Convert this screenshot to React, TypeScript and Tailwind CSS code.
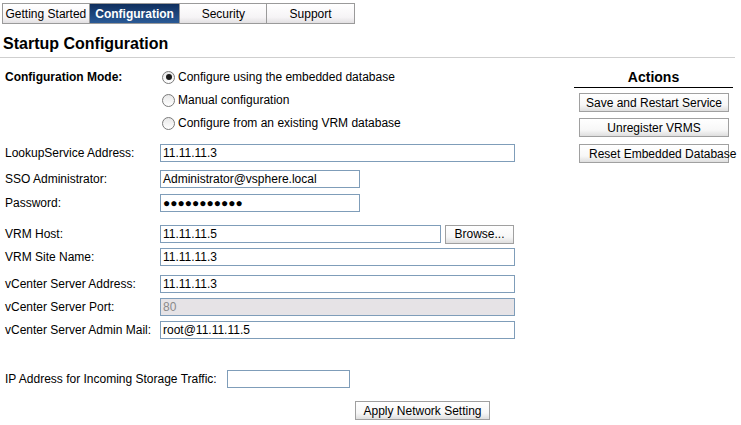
import { ReactNode } from "react";

const btn =
  "flex items-center justify-center h-[19px] border border-[#a0a0a0] bg-[linear-gradient(to_bottom,#ffffff_0%,#f7f7f7_65%,#dedede_100%)] text-[12px] text-black whitespace-nowrap";

const Radio = ({ checked, label }: { checked?: boolean; label: string }) => (
  <div className="flex items-center h-[16px]">
    <span className="flex items-center justify-center w-[13px] h-[13px] rounded-full border border-[#7a7a7a] bg-[linear-gradient(to_bottom,#e8e8e8,#ffffff)]">
      {checked && <span className="w-[6px] h-[6px] rounded-full bg-[#1a1a1a]" />}
    </span>
    <span className="ml-[3px]">{label}</span>
  </div>
);

const Field = ({
  label,
  value,
  width = "w-[355px]",
  mt,
  disabled,
  children,
}: {
  label: string;
  value?: string;
  width?: string;
  mt: string;
  disabled?: boolean;
  children?: ReactNode;
}) => (
  <div className={`flex items-center h-[18px] ${mt}`}>
    <span className="w-[155px] shrink-0">{label}</span>
    <div
      className={`${width} h-[18px] border border-[#7f9db9] px-[2px] flex items-center ${
        disabled ? "bg-[#e6e3e6] text-[#8a8a8a]" : "bg-white"
      }`}
    >
      {value}
    </div>
    {children}
  </div>
);

export default function App() {
  const tabs = ["Getting Started", "Configuration", "Security", "Support"];
  const tabW = ["w-[86px]", "w-[91px]", "w-[87px]", "w-[88px]"];

  return (
    <div className="w-[741px] h-[425px] overflow-hidden bg-white text-black text-[12px] font-['Liberation_Sans',Arial,sans-serif]">
      {/* tabs */}
      <div className="ml-[2px] mt-[3px] flex h-[21px] w-[353px] border border-[#9a9a9a]">
        {tabs.map((t, i) => (
          <div
            key={t}
            className={`${tabW[i]} flex items-center justify-center ${i > 0 ? "border-l border-[#9a9a9a]" : ""} ${
              t === "Configuration"
                ? "bg-[linear-gradient(to_bottom,#0f2f5e,#2a5a96)] text-white font-bold"
                : "bg-[linear-gradient(to_bottom,#ffffff_0%,#f6f4f6_70%,#e2e0e2_100%)]"
            }`}
          >
            {t}
          </div>
        ))}
      </div>

      <h1 className="ml-[3px] mt-[11px] text-[16px] leading-[18px] font-bold">Startup Configuration</h1>
      <div className="mt-[4px] h-px w-[735px] bg-[#cfcfcf]" />

      <div className="flex mt-[11px]">
        {/* left form */}
        <div className="w-[574px] shrink-0 pl-[5px]">
          <div className="flex">
            <span className="w-[157px] font-bold leading-[16px]">Configuration Mode:</span>
            <div className="flex flex-col gap-[7px]">
              <Radio checked label="Configure using the embedded database" />
              <Radio label="Manual configuration" />
              <Radio label="Configure from an existing VRM database" />
            </div>
          </div>

          <Field label="LookupService Address:" value="11.11.11.3" mt="mt-[13px]" />
          <Field label="SSO Administrator:" value="Administrator@vsphere.local" width="w-[200px]" mt="mt-[8px]" />
          <Field label="Password:" value="●●●●●●●●●●●" width="w-[200px]" mt="mt-[6px]" />
          <Field label="VRM Host:" value="11.11.11.5" width="w-[281px]" mt="mt-[13px]">
            <div className={`${btn} ml-[4px] w-[69px]`}>Browse...</div>
          </Field>
          <Field label="VRM Site Name:" value="11.11.11.3" mt="mt-[5px]" />
          <Field label="vCenter Server Address:" value="11.11.11.3" mt="mt-[9px]" />
          <Field label="vCenter Server Port:" value="80" disabled mt="mt-[5px]" />
          <Field label="vCenter Server Admin Mail:" value="root@11.11.11.5" mt="mt-[5px]" />

          <div className="flex items-center h-[18px] mt-[31px]">
            <span>IP Address for Incoming Storage Traffic:</span>
            <div className="ml-[10px] w-[123px] h-[18px] border border-[#7f9db9] bg-white" />
          </div>
          <div className={`${btn} ml-[350px] mt-[13px] w-[135px]`}>Apply Network Setting</div>
        </div>

        {/* actions */}
        <div className="w-[159px] shrink-0">
          <div className="h-[19px] border-b border-black flex items-start justify-center text-[14px] font-bold leading-[16px]">
            Actions
          </div>
          <div className="ml-[5px] flex flex-col">
            <div className={`${btn} mt-[5px] w-[150px]`}>Save and Restart Service</div>
            <div className={`${btn} mt-[6px] w-[150px]`}>Unregister VRMS</div>
            <div className={`${btn} mt-[7px] w-[150px] !justify-start pl-[9px]`}>Reset Embedded Database</div>
          </div>
        </div>
      </div>
    </div>
  );
}
